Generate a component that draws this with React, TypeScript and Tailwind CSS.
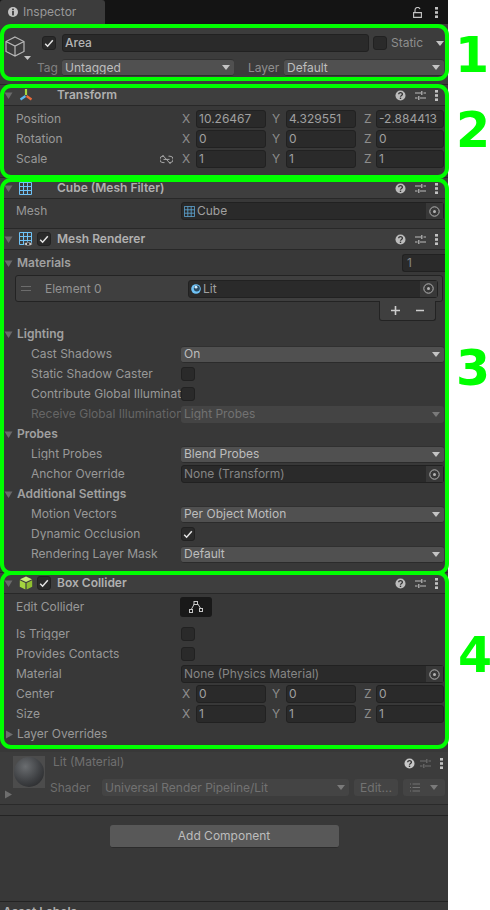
import React from 'react';

const Tri = ({ open = true, dim = false }: { open?: boolean; dim?: boolean }) => (
  <svg width="9" height="9" viewBox="0 0 9 9" className="shrink-0">
    {open ? (
      <path d="M0.5 1.5h8L4.5 8z" fill={dim ? '#5e5e5e' : '#6b6b6b'} />
    ) : (
      <path d="M1 0.5v8L8 4.5z" fill="#6e6e6e" />
    )}
  </svg>
);

const Arrow = ({ dim = false }: { dim?: boolean }) => (
  <svg width="8" height="5" viewBox="0 0 8 5" className="shrink-0">
    <path d="M0 0h8L4 5z" fill={dim ? '#7a7a7a' : '#c4c4c4'} />
  </svg>
);

const Check = ({ on = false }: { on?: boolean }) => (
  <span className="flex h-[14px] w-[14px] shrink-0 items-center justify-center rounded-[3px] border border-[#212121] bg-[#2a2a2a]">
    {on && (
      <svg width="10" height="9" viewBox="0 0 10 9">
        <path d="M1.2 4.8l2.4 2.4 5.2-6" fill="none" stroke="#e4e4e4" strokeWidth="1.5" />
      </svg>
    )}
  </span>
);

const Help = ({ dim = false }: { dim?: boolean }) => (
  <svg width="11" height="11" viewBox="0 0 11 11">
    <circle cx="5.5" cy="5.5" r="5" fill={dim ? '#c8c8c8' : '#bcbcbc'} />
    <path d="M3.7 4.2c0-2.2 3.7-2.2 3.7 0 0 1.3-1.9 1.2-1.9 2.6" fill="none" stroke="#333" strokeWidth="1.3" />
    <rect x="4.8" y="7.6" width="1.4" height="1.4" fill="#333" />
  </svg>
);

const Sliders = ({ dim = false }: { dim?: boolean }) => (
  <svg width="11" height="11" viewBox="0 0 11 11">
    <path d="M0 3h6M8.5 3H11M0 8h2.5M5 8h6M6.8 1v4M3.8 6v4" fill="none" stroke={dim ? '#6e6e6e' : '#bcbcbc'} strokeWidth="1.2" />
  </svg>
);

const Dots = () => (
  <svg width="3" height="11" viewBox="0 0 3 11">
    <rect x="0" y="0" width="3" height="2.6" fill="#c2c2c2" />
    <rect x="0" y="4.2" width="3" height="2.6" fill="#c2c2c2" />
    <rect x="0" y="8.4" width="3" height="2.6" fill="#c2c2c2" />
  </svg>
);

const Target = () => (
  <svg width="11" height="11" viewBox="0 0 11 11">
    <circle cx="5.5" cy="5.5" r="4.7" fill="none" stroke="#b4b4b4" strokeWidth="1" />
    <circle cx="5.5" cy="5.5" r="1.5" fill="#b4b4b4" />
  </svg>
);

const Grid = ({ size = 13, color = '#6fc3f7' }: { size?: number; color?: string }) => (
  <svg width={size} height={size} viewBox="0 0 13 13">
    <path d="M.5.5h12v12H.5zM4.5.5v12M8.5.5v12M.5 4.5h12M.5 8.5h12" fill="none" stroke={color} strokeWidth="1" />
  </svg>
);

const MeshRendererIcon = () => (
  <svg width="14" height="15" viewBox="0 0 14 15">
    <path d="M.5.5h12v12H.5zM4.5.5v12M8.5.5v12M.5 4.5h12M.5 8.5h12" fill="none" stroke="#6fc3f7" strokeWidth="1" />
    <path d="M5 12c2-2.6 6-2.6 8.5 0-2.5 2.6-6.5 2.6-8.5 0z" fill="#d6d6d6" stroke="#383838" strokeWidth="0.8" />
    <circle cx="9.2" cy="12" r="1.3" fill="#333" />
  </svg>
);

const TransformIcon = () => (
  <svg width="14" height="14" viewBox="0 0 14 14">
    <path d="M7 7V1" stroke="#a5d63f" strokeWidth="2.2" />
    <path d="M6.5 8L1.5 11.5" stroke="#58b8f0" strokeWidth="2.2" />
    <path d="M7.5 8l5 3.5" stroke="#ea6a3a" strokeWidth="2.2" />
  </svg>
);

const GreenCube = () => (
  <svg width="14" height="14" viewBox="0 0 14 14">
    <path d="M7 .5l6 2.8L7 6 1 3.3z" fill="#c6ea7a" />
    <path d="M.8 4.2L6.4 7v6.6L.8 10.8z" fill="#a5d63f" />
    <path d="M13.2 4.2L7.6 7v6.6l5.6-2.8z" fill="#8fc030" />
  </svg>
);

const Field = ({ v }: { v: string }) => (
  <span className="flex h-[18px] min-w-0 flex-1 items-center overflow-hidden whitespace-nowrap rounded-[3px] border border-[#212121] bg-[#2a2a2a] pl-[2px] text-[#a0a0a0]">
    {v}
  </span>
);

const Vec3 = ({ x, y, z }: { x: string; y: string; z: string }) => (
  <div className="flex min-w-0 flex-1 items-center">
    <span className="w-[15px] shrink-0 pl-px text-[#8e8e8e]">X</span>
    <span className="w-[70px] shrink-0"><span className="flex"><Field v={x} /></span></span>
    <span className="w-[20px] shrink-0 pl-[6px] text-[#8e8e8e]">Y</span>
    <span className="w-[70px] shrink-0"><span className="flex"><Field v={y} /></span></span>
    <span className="w-[20px] shrink-0 pl-[8px] text-[#8e8e8e]">Z</span>
    <span className="min-w-0 flex-1"><span className="flex"><Field v={z} /></span></span>
  </div>
);

const Row = ({ label, indent = 16, dim = false, children }: { label: string; indent?: number; dim?: boolean; children?: React.ReactNode }) => (
  <div className="flex h-[20px] items-center pr-[4px]">
    <span
      className={`w-[181px] shrink-0 overflow-hidden whitespace-nowrap ${dim ? 'text-[#666]' : 'text-[#989898]'}`}
      style={{ paddingLeft: indent, paddingRight: 2 }}
    >
      {label}
    </span>
    {children}
  </div>
);

const Dropdown = ({ v, dim = false }: { v: string; dim?: boolean }) => (
  <span
    className={`flex h-[17px] min-w-0 flex-1 items-center justify-between rounded-[3px] pl-[3px] pr-[4px] ${
      dim ? 'bg-[#444] text-[#727272]' : 'border-y border-t-[#303030] border-b-[#2b2b2b] bg-[#505050] text-[#bdbdbd]'
    }`}
  >
    <span className="overflow-hidden whitespace-nowrap">{v}</span>
    <Arrow dim={dim} />
  </span>
);

const ObjectField = ({ children }: { children: React.ReactNode }) => (
  <span className="flex h-[18px] min-w-0 flex-1 items-center justify-between rounded-[3px] border border-[#212121] bg-[#2a2a2a] pl-[2px] text-[#858585]">
    <span className="flex items-center gap-[2px] overflow-hidden whitespace-nowrap">{children}</span>
    <span className="flex h-full w-[17px] shrink-0 items-center justify-center bg-[#383838]"><Target /></span>
  </span>
);

const GroupHead = ({ label }: { label: string }) => (
  <div className="flex h-[20px] items-center gap-[4px] pl-[4px] font-semibold text-[#a0a0a0]">
    <Tri />
    {label}
  </div>
);

const ComponentHead = ({ icon, check, label }: { icon: React.ReactNode; check?: boolean; label: string }) => (
  <div className="flex h-[22px] items-center border-y border-[#282828] bg-[#3e3e3e] pl-[4px] pr-[10px]">
    <Tri />
    <span className="ml-[5px] flex w-[15px] shrink-0 justify-center">{icon}</span>
    <span className="ml-[4px] w-[14px] shrink-0">{check && <Check on />}</span>
    <span className="ml-[6px] flex-1 font-semibold text-[#b0b0b0]">{label}</span>
    <span className="flex items-center">
      <Help />
      <span className="ml-[9px]"><Sliders /></span>
      <span className="ml-[9px]"><Dots /></span>
    </span>
  </div>
);

const GreenBox = ({ cls }: { cls: string }) => (
  <div className={`pointer-events-none absolute left-0 w-[449px] rounded-[11px] border-[4px] border-[#00ff00] ${cls}`} />
);

const Num = ({ n, cls }: { n: string; cls: string }) => (
  <span className={`absolute font-['DejaVu_Sans',sans-serif] text-[49px] leading-none font-bold text-[#00ff00] ${cls}`}>{n}</span>
);

export default function App() {
  return (
    <div className="relative h-[910px] w-[490px] overflow-hidden bg-white font-['Inter',sans-serif] text-[12px] leading-none">
      <div className="flex h-[910px] w-[448px] flex-col overflow-hidden bg-[#383838] [&>*]:shrink-0">
        {/* tab bar */}
        <div className="flex h-[24px] items-center justify-between bg-[#141414] pr-[10px]">
          <div className="flex h-full w-[105px] items-center gap-[5px] rounded-t-[3px] bg-[#3c3c3c] pl-[8px] text-[#999]">
            <svg width="10" height="10" viewBox="0 0 10 10">
              <circle cx="5" cy="5" r="5" fill="#c4c4c4" />
              <rect x="4.1" y="1.6" width="1.8" height="1.6" fill="#3c3c3c" />
              <rect x="4.1" y="4" width="1.8" height="4.4" fill="#3c3c3c" />
            </svg>
            Inspector
          </div>
          <div className="flex items-center gap-[13px]">
            <svg width="9" height="11" viewBox="0 0 9 11">
              <path d="M2 5V3a2.6 2.6 0 0 1 5-1M.6 5.6h7.8v4.8H.6z" fill="none" stroke="#c4c4c4" strokeWidth="1.1" />
            </svg>
            <Dots />
          </div>
        </div>

        {/* object header */}
        <div className="relative h-[60px] bg-[#3c3c3c] pr-[4px] pt-[10px]">
          <svg width="20" height="21" viewBox="0 0 20 21" className="absolute left-[5px] top-[12px]">
            <path d="M10 1l9 4.5v10L10 20l-9-4.5v-10zM1 5.5L10 10l9-4.5M10 10v10" fill="none" stroke="#b8b8b8" strokeWidth="1.2" />
          </svg>
          <svg width="7" height="4" viewBox="0 0 7 4" className="absolute left-[24px] top-[32px]">
            <path d="M0 0h7L3.5 4z" fill="#c4c4c4" />
          </svg>
          <div className="flex h-[18px] items-center pl-[42px]">
            <Check on />
            <span className="ml-[6px] flex h-[18px] w-[307px] items-center rounded-[3px] border border-[#212121] bg-[#2a2a2a] pl-[2px] font-medium text-[#b4b4b4]">Area</span>
            <span className="ml-[4px]"><Check /></span>
            <span className="ml-[4px] flex-1 text-[#8e8e8e]">Static</span>
            <Arrow />
          </div>
          <div className="mt-[7px] flex h-[17px] items-center">
            <span className="w-[62px] shrink-0 pl-[37px] text-[#808080]">Tag</span>
            <span className="flex w-[172px] shrink-0"><Dropdown v="Untagged" /></span>
            <span className="w-[50px] shrink-0 pl-[14px] text-[#8e8e8e]">Layer</span>
            <span className="flex min-w-0 flex-1"><Dropdown v="Default" /></span>
          </div>
        </div>

        {/* transform */}
        <ComponentHead icon={<TransformIcon />} label="Transform" />
        <div className="pb-[8px] pt-[3px]">
          <Row label="Position"><Vec3 x="10.26467" y="4.329551" z="-2.884413" /></Row>
          <Row label="Rotation"><Vec3 x="0" y="0" z="0" /></Row>
          <div className="relative">
            <Row label="Scale"><Vec3 x="1" y="1" z="1" /></Row>
            <svg width="13" height="11" viewBox="0 0 13 11" className="absolute left-[160px] top-[5px]">
              <path d="M4 2.2H3a3.2 3.2 0 0 0 0 6.4h1.5M8.5 2.2H10a3.2 3.2 0 0 1 0 6.4H9M3.5 5.4h6M2.5 1l8 9" fill="none" stroke="#a8a8a8" strokeWidth="1" />
            </svg>
          </div>
        </div>

        {/* mesh filter */}
        <ComponentHead icon={<Grid />} label="Cube (Mesh Filter)" />
        <div className="pb-[7px] pt-[2px]">
          <Row label="Mesh">
            <ObjectField><Grid size={11} color="#5ea6d4" /><span className="text-[#a0a0a0]">Cube</span></ObjectField>
          </Row>
        </div>

        {/* mesh renderer */}
        <ComponentHead icon={<MeshRendererIcon />} check label="Mesh Renderer" />
        <div className="pb-[8px] pt-[3px]">
          <div className="flex h-[20px] items-center justify-between">
            <GroupHead label="Materials" />
            <span className="flex h-[18px] w-[46px] items-center rounded-l-[3px] border border-r-0 border-[#212121] bg-[#2a2a2a] pl-[4px] text-[#858585]">1</span>
          </div>
          <div className="mx-[15px] mr-[5px] mt-[2px] flex h-[27px] items-center rounded-[3px] border border-[#232323] bg-[#3f3f3f]">
            <span className="ml-[5px] h-[5px] w-[10px] border-y border-[#6c6c6c]" />
            <span className="ml-[14px] w-[143px] text-[#929292]">Element 0</span>
            <span className="flex min-w-0 flex-1 pr-[4px]">
              <ObjectField>
                <svg width="10" height="10" viewBox="0 0 10 10">
                  <circle cx="5" cy="5" r="4.8" fill="#6fc3f7" />
                  <circle cx="5.8" cy="4.4" r="3" fill="#2a4b63" />
                  <circle cx="5" cy="3.2" r="1.4" fill="#cfe9fa" />
                </svg>
                <span className="text-[#a0a0a0]">Lit</span>
              </ObjectField>
            </span>
          </div>
          <div className="ml-[379px] flex h-[20px] w-[57px] -translate-y-px items-center rounded-b-[3px] border border-t-0 border-[#232323] bg-[#3f3f3f] pl-[11px]">
            <svg width="36" height="9" viewBox="0 0 36 9">
              <path d="M0 4.5h9M4.5 0v9M25 4.5h8" fill="none" stroke="#cdcdcd" strokeWidth="1.6" />
            </svg>
          </div>
          <div className="mt-[2px]">
            <GroupHead label="Lighting" />
            <Row label="Cast Shadows" indent={31}><Dropdown v="On" /></Row>
            <Row label="Static Shadow Caster" indent={31}><Check /></Row>
            <Row label="Contribute Global Illumination" indent={31}><Check /></Row>
            <Row label="Receive Global Illumination" indent={31} dim><Dropdown v="Light Probes" dim /></Row>
            <GroupHead label="Probes" />
            <Row label="Light Probes" indent={31}><Dropdown v="Blend Probes" /></Row>
            <Row label="Anchor Override" indent={31}><ObjectField>None (Transform)</ObjectField></Row>
            <GroupHead label="Additional Settings" />
            <Row label="Motion Vectors" indent={31}><Dropdown v="Per Object Motion" /></Row>
            <Row label="Dynamic Occlusion" indent={31}><Check on /></Row>
            <Row label="Rendering Layer Mask" indent={31}><Dropdown v="Default" /></Row>
          </div>
        </div>

        {/* box collider */}
        <ComponentHead icon={<GreenCube />} check label="Box Collider" />
        <div className="pb-[8px] pt-[3px]">
          <Row label="Edit Collider">
            <span className="-ml-px flex h-[20px] w-[32px] items-center justify-center rounded-[3px] bg-[#191919]">
              <svg width="14" height="12" viewBox="0 0 14 12">
                <path d="M2 9L5.5 2.5h3L12 8" fill="none" stroke="#c8c8c8" strokeWidth="1" />
                <rect x="5" y="0.5" width="3.5" height="3" fill="#191919" stroke="#c8c8c8" />
                <rect x="0.5" y="8.5" width="3" height="3" fill="#191919" stroke="#c8c8c8" />
                <rect x="10.5" y="7.5" width="3" height="3" fill="#191919" stroke="#c8c8c8" />
              </svg>
            </span>
          </Row>
          <div className="mt-[7px]">
            <Row label="Is Trigger"><Check /></Row>
            <Row label="Provides Contacts"><Check /></Row>
            <Row label="Material"><ObjectField>None (Physics Material)</ObjectField></Row>
            <Row label="Center"><Vec3 x="0" y="0" z="0" /></Row>
            <Row label="Size"><Vec3 x="1" y="1" z="1" /></Row>
            <div className="flex h-[20px] items-center gap-[4px] pl-[5px] text-[#989898]">
              <Tri open={false} />
              <span className="-ml-px">Layer Overrides</span>
            </div>
          </div>
        </div>

        {/* material preview */}
        <div className="relative h-[53px] border-b border-[#2a2a2a] bg-[#3c3c3c]">
          <div className="absolute left-[13px] top-[4px] flex h-[32px] w-[32px] items-center justify-center bg-[#4c4c4c]">
            <div className="h-[30px] w-[30px] rounded-full bg-[radial-gradient(circle_at_38%_32%,#6a6d70,#3e4043_55%,#2a2b2d_85%)]" />
          </div>
          <span className="absolute left-[4px] top-[38px]"><Tri open={false} /></span>
          <span className="absolute left-[53px] top-[4px] text-[#707070]">Lit (Material)</span>
          <span className="absolute right-[33px] top-[6px]"><Help dim /></span>
          <span className="absolute right-[17px] top-[6px]"><Sliders dim /></span>
          <span className="absolute right-[5px] top-[6px]"><Dots /></span>
          <div className="mt-[27px] flex h-[17px] items-center pl-[50px] pr-[3px]">
            <span className="w-[52px] shrink-0 text-[#6e6e6e]">Shader</span>
            <span className="flex w-[247px] shrink-0"><Dropdown v="Universal Render Pipeline/Lit" dim /></span>
            <span className="ml-[5px] flex h-[17px] w-[44px] shrink-0 items-center justify-center rounded-[3px] bg-[#444] text-[#727272]">Edit...</span>
            <span className="ml-[5px] flex h-[17px] min-w-0 flex-1 items-center justify-center gap-[10px] rounded-[3px] bg-[#444]">
              <svg width="10" height="9" viewBox="0 0 10 9">
                <path d="M2.5 1H10M2.5 4.5H10M2.5 8H10M0 1h1M0 4.5h1M0 8h1" fill="none" stroke="#727272" strokeWidth="1" />
              </svg>
              <Arrow dim />
            </span>
          </div>
        </div>

        <div className="h-[11px] border-b border-[#232323] bg-[#3a3a3a]" />

        {/* footer */}
        <div className="flex h-[85px] justify-center pt-[9px]">
          <span className="flex h-[23px] w-[229px] items-center justify-center rounded-[3px] border-b border-[#2b2b2b] bg-[#585858] text-[#bdbdbd]">Add Component</span>
        </div>
        <div className="h-[20px] border-t border-[#232323] pl-[3px] pt-[4px] font-semibold text-[#b0b0b0]">Asset Labels</div>
      </div>

      {/* annotation overlays */}
      <GreenBox cls="top-[24px] h-[57px]" />
      <GreenBox cls="top-[84px] h-[95px]" />
      <GreenBox cls="top-[178px] h-[397px]" />
      <GreenBox cls="top-[571px] h-[178px]" />
      <Num n="1" cls="left-[455px] top-[31px]" />
      <Num n="2" cls="left-[456px] top-[106px]" />
      <Num n="3" cls="left-[456px] top-[344px]" />
      <Num n="4" cls="left-[458px] top-[631px]" />
    </div>
  );
}
